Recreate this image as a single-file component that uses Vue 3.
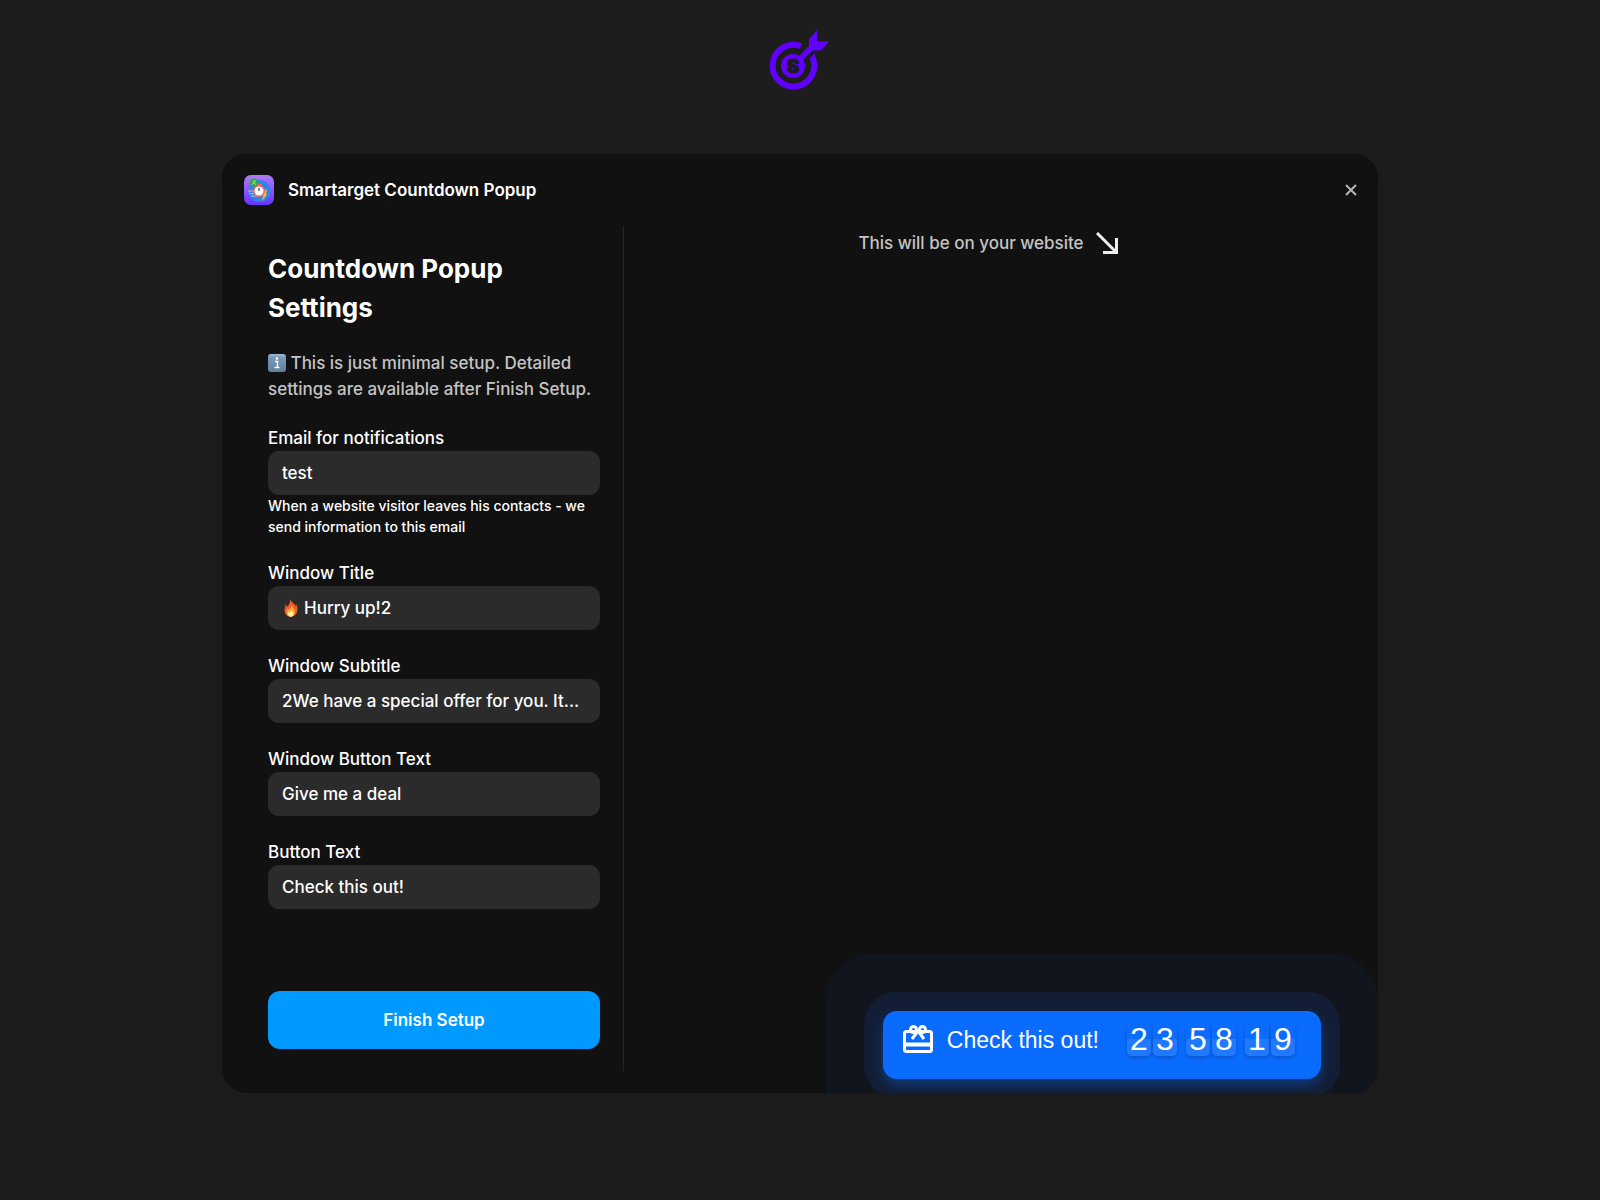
<script setup>
import { ref } from 'vue'

const email = ref('test')
const windowTitle = ref('Hurry up!2')
const fields = ref([
  { id: 'subtitle', label: 'Window Subtitle', value: '2We have a special offer for you. It...' },
  { id: 'window-button', label: 'Window Button Text', value: 'Give me a deal' },
  { id: 'button', label: 'Button Text', value: 'Check this out!' }
])

// hours, minutes, seconds
const countdown = ['23', '58', '19']
</script>

<template>
  <div class="page">
    <svg class="logo" viewBox="0 0 64 64" aria-label="Smartarget">
      <path d="M32 16 A20.800 20.800 0 1 0 44.500 27.500" fill="none" stroke="#6200ff" stroke-width="6" />
      <path d="M31 19 L34.500 13.500 L30 12.500 V19 Z M41.500 29 L47 23 V30 Z" fill="#6200ff" />
      <circle cx="25" cy="36" r="12" fill="#6200ff" />
      <path d="M30 31 L48 13" stroke="#6200ff" stroke-width="5.500" />
      <path d="M41 21 V9 L49 0 V11.500 H61 L53 20.500 H44 Z" fill="#6200ff" />
      <text x="25" y="43" class="logo-letter">S</text>
    </svg>

    <main class="card">
      <header class="card-header">
        <svg class="app-icon" viewBox="0 0 30 30">
          <defs>
            <linearGradient id="app-bg" x1="0" y1="0" x2="0" y2="1">
              <stop offset="0" stop-color="#ae7cf5" />
              <stop offset="1" stop-color="#6633ff" />
            </linearGradient>
          </defs>
          <rect width="30" height="30" rx="7" fill="url(#app-bg)" />
          <circle cx="15.500" cy="16" r="11" fill="#2f83ee" />
          <path d="M4 16h9M5 18.500h8M7 21h8" stroke="#f3b08f" stroke-width="1" />
          <path d="M20 16l3-2-1 5 1 1-5 6 1-5z" fill="#f7b731" />
          <rect x="13" y="8.500" width="4" height="3" fill="#ef6461" />
          <circle cx="15" cy="16" r="6" fill="#ef6461" />
          <circle cx="15" cy="16" r="4.500" fill="#fff" />
          <path d="M15 13v3" stroke="#334" stroke-width="1.200" />
          <circle cx="10" cy="7.500" r="4" fill="#35a936" />
          <path d="M8.500 9.500l3-4M8.500 6h1M11 9h1" stroke="#d8f5d0" stroke-width="1" />
        </svg>
        <h2>Smartarget Countdown Popup</h2>
        <button class="close" type="button" aria-label="Close">
          <svg viewBox="0 0 12 12"><path d="M1 1l10 10M11 1l-10 10" /></svg>
        </button>
      </header>

      <div class="card-body">
        <form class="settings" @submit.prevent>
          <h1>Countdown Popup Settings</h1>
          <p class="note">
            <svg class="info" viewBox="0 0 18 18">
              <defs>
                <linearGradient id="info-bg" x1="0" y1="0" x2="0" y2="1">
                  <stop offset="0" stop-color="#9dbcd8" />
                  <stop offset="0.200" stop-color="#7899b8" />
                  <stop offset="1" stop-color="#607f9b" />
                </linearGradient>
              </defs>
              <rect width="18" height="18" rx="3" fill="url(#info-bg)" />
              <circle cx="9" cy="4.500" r="1.300" fill="#fff" />
              <path d="M7 7.500h2.500v6M6.500 13.500h5" fill="none" stroke="#fff" stroke-width="1.400" />
            </svg>
            This is just minimal setup. Detailed settings are available after Finish Setup.
          </p>

          <div class="field">
            <label for="email">Email for notifications</label>
            <div class="control"><input id="email" v-model="email" type="text" /></div>
            <small>When a website visitor leaves his contacts - we send information to this email</small>
          </div>

          <div class="field">
            <label for="title">Window Title</label>
            <div class="control">
              <svg class="flame" viewBox="0 0 18 18">
                <path d="M8 0c.8 3 5 4.500 5.500 7 .5-.6.5-1.800.3-2.500 2.200 3 2.400 7 .7 9.800-1.200 2-3.200 3.500-5.500 3.500-3.800 0-6.500-2.800-6.500-6.500C2.500 8.800 3.500 7.500 3.500 5.500c.8.5 1.300 1.600 1.400 2.500C6.800 6 8.500 3.500 8 0z" fill="#ee5b26" />
                <path d="M9.500 5c.2 2.500 3.300 4 3.500 7 .2 3-1.700 5.500-4.300 5.500S4.500 15.500 4.500 13c0-1.800.6-2.500 1.100-3.500.6.4.8 1 .9 1.600C8 9.500 9.700 7.500 9.500 5z" fill="#fda43a" />
                <path d="M9 10.500c.2 1.500 2.500 2.500 2.500 4.500 0 1.700-1.300 2.700-2.800 2.700S6 16.600 6 15c0-1 .5-1.700 1-2.200l.8 1c.7-.8 1.300-2 1.200-3.300z" fill="#fff0a0" />
              </svg>
              <input id="title" v-model="windowTitle" type="text" />
            </div>
          </div>

          <div v-for="field in fields" :key="field.id" class="field">
            <label :for="field.id">{{ field.label }}</label>
            <div class="control"><input :id="field.id" v-model="field.value" type="text" /></div>
          </div>

          <button class="finish" type="submit">Finish Setup</button>
        </form>

        <section class="preview">
          <p class="hint">
            This will be on your website
            <svg viewBox="0 0 22 22"><path d="M1 1l19 19M20.500 6v14.500H7" /></svg>
          </p>
        </section>
      </div>

      <!-- floating widget button, pinned to the corner of the preview -->
      <button class="widget" type="button">
        <svg class="gift" viewBox="0 0 30 28">
          <rect x="1.500" y="6.500" width="27" height="20" rx="2" />
          <path d="M1.500 19.500h27" stroke-width="4" />
          <circle cx="10.500" cy="4.500" r="3" />
          <circle cx="19.500" cy="4.500" r="3" />
          <path d="M15 6l-6 8M15 6l6 8" />
        </svg>
        <span class="widget-text">Check this out!</span>
        <span class="timer">
          <span v-for="(part, i) in countdown" :key="i" class="group">
            <span v-for="(digit, j) in part" :key="j" class="digit">{{ digit }}</span>
          </span>
        </span>
      </button>
    </main>
  </div>
</template>

<style>
body {
  margin: 0;
  background: #1d1d1d;
}
</style>

<style scoped>
.page {
  box-sizing: border-box;
  min-height: 100vh;
  padding: 30px 24px 48px;
  font-family: Inter, sans-serif;
  color: #fff;
  background: #1d1d1d;
}

h1,
h2,
p {
  margin: 0;
}

.logo {
  display: block;
  width: 64px;
  height: 64px;
  margin: 0 auto 60px;
  overflow: visible;
}

.logo-letter {
  font-size: 19px;
  font-weight: 900;
  text-anchor: middle;
  fill: #1d1d1d;
  stroke: #1d1d1d;
  stroke-width: 1;
}

.card {
  position: relative;
  overflow: hidden;
  max-width: 1156px;
  margin: 0 auto;
  border-radius: 24px;
  background: #111;
  padding-bottom: 22px;
  box-shadow: 0 4px 24px rgba(0, 0, 0, 0.1);
}

.card-header {
  display: flex;
  align-items: center;
  gap: 14px;
  height: 72px;
  padding: 0 21px 0 22px;
}

.app-icon {
  width: 30px;
  height: 30px;
}

.card-header h2 {
  flex: 1;
  font-size: 17px;
  font-weight: 600;
}

.close {
  display: flex;
  padding: 0;
  border: 0;
  background: none;
  cursor: pointer;
}

.close svg {
  width: 12px;
  height: 12px;
  fill: none;
  stroke: #b5b5b5;
  stroke-width: 2;
}

.card-body {
  display: grid;
  grid-template-columns: 402px 1fr;
}

.settings {
  display: flex;
  flex-direction: column;
  gap: 23px;
  padding: 23px 23px 22px 46px;
  border-right: 1px solid #262626;
}

h1 {
  font-size: 26px;
  font-weight: 700;
  line-height: 39px;
}

.note {
  font-size: 17px;
  font-weight: 500;
  line-height: 26px;
  color: #c4c4c4;
}

.info {
  width: 18px;
  height: 18px;
  vertical-align: -3px;
}

.field {
  display: flex;
  flex-direction: column;
}

.field label {
  font-size: 17px;
  font-weight: 500;
  line-height: 26px;
}

.field small {
  font-size: 14px;
  font-weight: 500;
  line-height: 21px;
}

.control {
  display: flex;
  align-items: center;
  gap: 4px;
  height: 44px;
  padding: 0 14px;
  border-radius: 11px;
  background: #2b2b2b;
}

.control input {
  flex: 1;
  min-width: 0;
  padding: 0;
  border: 0;
  outline: none;
  background: none;
  font-family: inherit;
  font-size: 17px;
  font-weight: 500;
  color: #fff;
  text-overflow: ellipsis;
}

.flame {
  width: 18px;
  height: 18px;
}

.finish {
  height: 58px;
  margin-top: 59px;
  border: 0;
  border-radius: 12px;
  background: #0099ff;
  font-family: inherit;
  font-size: 17px;
  font-weight: 600;
  color: #fff;
  cursor: pointer;
}

.hint {
  display: flex;
  align-items: center;
  justify-content: center;
  gap: 12px;
  padding-top: 4px;
  padding-right: 26px;
  font-size: 17px;
  font-weight: 500;
  line-height: 26px;
  color: #c4c4c4;
}

.hint svg {
  width: 22px;
  height: 22px;
  fill: none;
  stroke: #eee;
  stroke-width: 3;
}

.widget {
  position: absolute;
  right: 57px;
  bottom: 14px;
  display: flex;
  align-items: center;
  height: 68px;
  padding: 0 26px 12px 20px;
  border: 0;
  border-radius: 14px;
  background: #0a6cff;
  box-shadow:
    0 6px 12px rgba(10, 108, 255, 0.35),
    0 0 0 19px rgba(23, 46, 92, 0.4),
    0 0 0 57px rgba(16, 60, 140, 0.1);
  font-family: 'Liberation Sans', sans-serif;
  font-size: 23px;
  color: #fff;
  cursor: pointer;
}

.gift {
  width: 30px;
  height: 28px;
  fill: none;
  stroke: #fff;
  stroke-width: 3;
  overflow: visible;
}

.widget-text {
  margin: 2px 28px 0 14px;
}

.timer {
  display: flex;
  gap: 9px;
}

.group {
  display: flex;
  gap: 2px;
}

.digit {
  width: 24px;
  border-radius: 5px;
  background: linear-gradient(#0a6cff 50%, #2079ff 50%);
  box-shadow: 0 2px 4px rgba(0, 0, 0, 0.2);
  font-size: 32px;
  line-height: 33px;
  text-align: center;
}
</style>
